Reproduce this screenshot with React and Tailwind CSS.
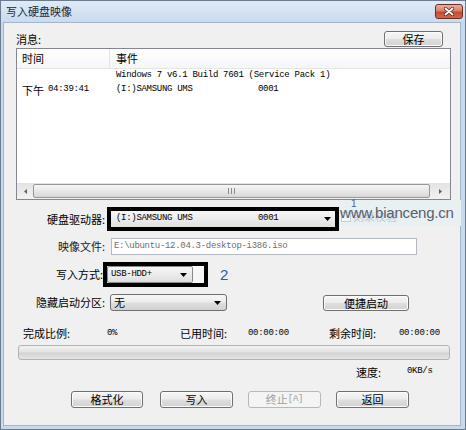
import React from "react";

// Win7-style push button
const btn =
  "flex items-center justify-center rounded-[3px] border border-[#707070] bg-[linear-gradient(#f6f6f6,#ececec_48%,#dedede_52%,#d2d2d2)] shadow-[inset_0_0_0_1px_#fbfbfb] text-[11px] leading-none text-black";

const mono = "font-['Liberation_Mono',monospace] text-[9px] tracking-[-0.3px]";

const Arrow = () => (
  <svg width="7" height="4" viewBox="0 0 7 4" className="shrink-0">
    <path d="M0 0h7L3.5 4z" fill="#000" />
  </svg>
);

export default function App() {
  return (
    <div className="relative w-[466px] h-[430px] overflow-hidden border border-[#6b7c8e] bg-[#c7d9ed] flex flex-col font-['Noto_Sans_CJK_SC',sans-serif] text-[11px] text-black">
      {/* title bar */}
      <div className="h-[21px] flex items-start justify-between bg-[linear-gradient(#dfeaf6,#c9dbef)]">
        <span className="mt-[4px] ml-[5px] text-[11px] leading-[13px] text-[#1e2833]">写入硬盘映像</span>
        <div className="mt-[3px] mr-[2px] w-[28px] h-[15px] rounded-[3px] border border-[#6e2b22] bg-[linear-gradient(#eab0a2,#d7806c_45%,#c44a32_55%,#d0684d)] flex items-center justify-center">
          <svg width="10" height="9" viewBox="0 0 10 9">
            <path d="M1.5 1.5l7 6M8.5 1.5l-7 6" stroke="#5a2018" strokeWidth="3.2" strokeLinecap="round" />
            <path d="M1.5 1.5l7 6M8.5 1.5l-7 6" stroke="#fff" strokeWidth="1.8" strokeLinecap="round" />
          </svg>
        </div>
      </div>

      {/* client area */}
      <div className="flex-1 ml-[2px] mr-[4px] mb-[3px] bg-[#f0f0f0] border border-[#a3b5c9] pl-[12px] pr-[9px] flex flex-col">
        {/* Row 1: 消息 + 保存 */}
        <div className="mt-[8px] h-[16px] flex items-end justify-between">
          <span className="leading-[13px] mb-[1px]">消息:</span>
          <div className={`${btn} w-[59px] h-[16px] mr-[8px]`}>保存</div>
        </div>

        {/* list view */}
        <div className="mt-[1px] h-[152px] border border-[#828790] bg-white flex flex-col">
          <div className="h-[20px] flex bg-[linear-gradient(#ffffff,#f5f6f7)] border-b border-[#e5e5e5]">
            <div className="w-[93px] border-r border-[#e5e5e5] pl-[5px] flex items-center">时间</div>
            <div className="pl-[6px] flex items-center">事件</div>
          </div>
          <div className="h-[14px] flex items-center">
            <div className="w-[93px]" />
            <div className={`pl-[6px] whitespace-pre ${mono}`}>Windows 7 v6.1 Build 7601 (Service Pack 1)</div>
          </div>
          <div className="h-[14px] flex items-center">
            <div className="w-[93px] pl-[5px] flex items-center">
              <span>下午</span>
              <span className={`ml-[4px] ${mono}`}>04:39:41</span>
            </div>
            <div className={`pl-[6px] flex ${mono}`}>
              <span className="w-[142px]">(I:)SAMSUNG UMS</span>
              <span>0001</span>
            </div>
          </div>
          <div className="flex-1" />
          {/* horizontal scrollbar */}
          <div className="h-[16px] flex items-center bg-[linear-gradient(#e3e3e3,#f2f2f2)]">
            <div className="w-[16px] h-full flex items-center justify-center">
              <svg width="3" height="5" viewBox="0 0 3 5"><path d="M3 0v5L0 2.5z" fill="#606060" /></svg>
            </div>
            <div className="flex-1 h-[14px] rounded-[2px] border border-[#979797] bg-[linear-gradient(#f5f5f5,#e8e8e8_50%,#d7d7d7)] flex items-center justify-center">
              <svg width="7" height="6" viewBox="0 0 7 6">
                <path d="M0.5 0v6M3.5 0v6M6.5 0v6" stroke="#8a8a8a" strokeWidth="1" />
              </svg>
            </div>
            <div className="w-[20px] h-full flex items-center justify-center">
              <svg width="3" height="5" viewBox="0 0 3 5"><path d="M0 0v5L3 2.5z" fill="#606060" /></svg>
            </div>
          </div>
        </div>

        {/* Row A: 硬盘驱动器 */}
        <div className="mt-[7px] h-[24px] flex items-center">
          <span className="w-[89px] text-right">硬盘驱动器:</span>
          <div className="ml-[2px] w-[232px] h-[24px] border-[4px] border-black">
            <div className="h-full rounded-[2px] bg-[linear-gradient(#f7f7f7,#ececec_50%,#e0e0e0)] flex items-center pl-[5px] pr-[4px]">
              <span className={`w-[142px] ${mono}`}>(I:)SAMSUNG UMS</span>
              <span className={`flex-1 ${mono}`}>0001</span>
              <Arrow />
            </div>
          </div>
        </div>

        {/* Row B: 映像文件 */}
        <div className="mt-[7px] h-[17px] flex items-center">
          <span className="w-[89px] text-right text-[#1a1a1a]">映像文件:</span>
          <div className="ml-[6px] w-[306px] h-[17px] border border-[#b5b9bf] bg-white flex items-center pl-[2px]">
            <span className={`${mono} text-[#6d6d6d]`}>E:\ubuntu-12.04.3-desktop-i386.iso</span>
          </div>
        </div>

        {/* Row C: 写入方式 */}
        <div className="mt-[7px] h-[25px] flex items-center">
          <span className="w-[87px] text-right">写入方式:</span>
          <div className="w-[105px] h-[25px] border-[4px] border-black bg-[#f7f7f7] flex">
            <div className="w-[86px] h-full border border-[#8a8a8a] rounded-[2px] bg-[linear-gradient(#f7f7f7,#ececec_50%,#dedede)] flex items-center justify-between pl-[3px] pr-[5px]">
              <span className={mono}>USB-HDD+</span>
              <Arrow />
            </div>
          </div>
          <span className="ml-[12px] text-[15px] leading-none text-[#2a5caa] font-['Liberation_Sans',sans-serif]">2</span>
        </div>

        {/* Row D: 隐藏启动分区 */}
        <div className="mt-[7px] h-[17px] flex items-center">
          <span className="w-[89px] text-right">隐藏启动分区:</span>
          <div className="ml-[5px] w-[117px] h-[17px] border border-[#707070] rounded-[3px] bg-[linear-gradient(#f6f6f6,#ececec_48%,#dedede_52%,#d2d2d2)] flex items-center justify-between pl-[3px] pr-[5px]">
            <span>无</span>
            <Arrow />
          </div>
          <div className={`${btn} ml-[96px] w-[86px] h-[16px] mt-[1px]`}>便捷启动</div>
        </div>

        {/* status row */}
        <div className="mt-[14px] h-[12px] grid grid-cols-[84px_73px_68px_81px_70px_auto] items-center pl-[7px]">
          <span>完成比例:</span>
          <span className={mono}>0%</span>
          <span>已用时间:</span>
          <span className={mono}>00:00:00</span>
          <span>剩余时间:</span>
          <span className={mono}>00:00:00</span>
        </div>

        {/* progress bar */}
        <div className="mt-[8px] ml-[2px] mr-[1px] h-[15px] rounded-[3px] border border-[#b2b2b2] bg-[linear-gradient(#f2f2f2,#e2e2e2_45%,#d3d3d3_55%,#e4e4e4)]" />

        {/* speed row */}
        <div className="mt-[6px] h-[12px] flex items-center pl-[340px]">
          <span className="w-[51px]">速度:</span>
          <span className={mono}>0KB/s</span>
        </div>

        {/* bottom buttons */}
        <div className="mt-[13px] h-[17px] flex pl-[55px]">
          <div className={`${btn} w-[72px] h-[17px]`}>格式化</div>
          <div className={`${btn} ml-[17px] w-[73px] h-[17px]`}>写入</div>
          <div className="ml-[15px] w-[73px] h-[17px] rounded-[3px] border border-[#b5b9bd] bg-[#f4f4f4] flex items-center justify-center text-[#a0a0a0]">
            <span>终止</span>
            <span className={mono}>[A]</span>
          </div>
          <div className={`${btn} ml-[15px] w-[73px] h-[17px]`}>返回</div>
        </div>
      </div>

      {/* annotation "1" + watermark overlay */}
      <div className="absolute left-[338px] top-[199px] w-[122px] h-[26px] bg-[#e9f0f2]">
        <span className="absolute left-[12px] top-[-1px] text-[10px] leading-none text-[#4f5f80] font-['Liberation_Sans',sans-serif]">1</span>
        <div className="absolute left-[2px] top-[11px] flex items-center gap-[2px] opacity-40">
          <div className="w-[10px] h-[10px] border border-[#8aa0b8] bg-white" />
          <span className="text-[11px] leading-none text-[#7a93b3]">刻录校验</span>
        </div>
        <span className="absolute left-[1px] top-[5px] text-[15px] leading-none tracking-[-0.2px] text-[#55606c] font-['Liberation_Sans',sans-serif]">www.bianceng.cn</span>
      </div>
    </div>
  );
}
